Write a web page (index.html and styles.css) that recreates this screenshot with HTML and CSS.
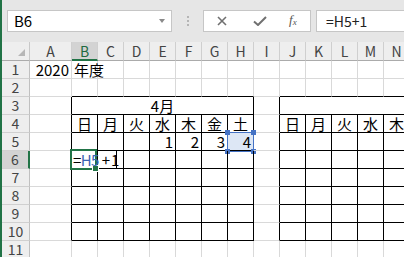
FILE: index.html
```
<!DOCTYPE html>
<html>
<head>
<title>Book1 - Excel</title>
<meta http-equiv="Content-Type" content="text/html; charset=UTF-8" />
<link rel="stylesheet" href="styles.css">
</head>
<body>
<div class="app">

<div class="bar">
  <div class="namebox"><span>B6</span><i class="arrow"></i></div>
  <div class="grip"><b></b><b></b><b></b></div>
  <div class="fxbox">
    <svg class="ic" width="10" height="10" viewBox="0 0 10 10"><path d="M1 1L9 9M9 1L1 9" stroke="#707070" stroke-width="1.6" fill="none"/></svg>
    <svg class="ic ok" width="14" height="10" viewBox="0 0 14 10"><path d="M1 5.5L5 9L13 1" stroke="#707070" stroke-width="2" fill="none"/></svg>
    <span class="fx">f<sub>x</sub></span>
  </div>
  <div class="formula">=H5+1</div>
</div>

<div class="sheet">
  <div class="corner"><i></i></div>
  <div class="ch">A</div><div class="ch on">B</div><div class="ch">C</div><div class="ch">D</div><div class="ch">E</div><div class="ch">F</div><div class="ch">G</div><div class="ch">H</div><div class="ch">I</div><div class="ch">J</div><div class="ch">K</div><div class="ch">L</div><div class="ch">M</div><div class="ch">N</div>

  <div class="rh">1</div>
  <div class="c num">2020</div><div class="c txt">年度</div><div class="c"></div><div class="c"></div><div class="c"></div><div class="c"></div><div class="c"></div><div class="c"></div><div class="c"></div><div class="c"></div><div class="c"></div><div class="c"></div><div class="c"></div><div class="c"></div>

  <div class="rh">2</div>
  <div class="c"></div><div class="c kb"></div><div class="c kb"></div><div class="c kb"></div><div class="c kb"></div><div class="c kb"></div><div class="c kb"></div><div class="c kb"></div><div class="c"></div><div class="c kb"></div><div class="c kb"></div><div class="c kb"></div><div class="c kb"></div><div class="c kb"></div>

  <div class="rh">3</div>
  <div class="c kr"></div><div class="c kr kb mid span7">4月</div><div class="c kr"></div><div class="c kb span5"></div>

  <div class="rh">4</div>
  <div class="c kr"></div><div class="c kr kb mid">日</div><div class="c kr kb mid">月</div><div class="c kr kb mid">火</div><div class="c kr kb mid">水</div><div class="c kr kb mid">木</div><div class="c kr kb mid">金</div><div class="c kr kb mid">土</div><div class="c kr"></div><div class="c kr kb mid">日</div><div class="c kr kb mid">月</div><div class="c kr kb mid">火</div><div class="c kr kb mid">水</div><div class="c kr kb mid">木</div>

  <div class="rh">5</div>
  <div class="c kr"></div><div class="c kr kb"></div><div class="c kr kb"></div><div class="c kr kb"></div><div class="c kr kb num">1</div><div class="c kr kb num">2</div><div class="c kr kb num">3</div><div class="c kr kb num ref">4<div class="refbox"><i class="h1"></i><i class="h2"></i><i class="h3"></i><i class="h4"></i></div></div><div class="c kr"></div><div class="c kr kb"></div><div class="c kr kb"></div><div class="c kr kb"></div><div class="c kr kb"></div><div class="c kr kb"></div>

  <div class="rh on">6</div>
  <div class="c kr"></div><div class="c kr kb edit"><div class="active"><i></i></div><span class="editor">=<span class="blue">H5</span><span class="rest">+1</span></span></div><div class="c kr kb"></div><div class="c kr kb"></div><div class="c kr kb"></div><div class="c kr kb"></div><div class="c kr kb"></div><div class="c kr kb"></div><div class="c kr"></div><div class="c kr kb"></div><div class="c kr kb"></div><div class="c kr kb"></div><div class="c kr kb"></div><div class="c kr kb"></div>

  <div class="rh">7</div>
  <div class="c kr"></div><div class="c kr kb"></div><div class="c kr kb"></div><div class="c kr kb"></div><div class="c kr kb"></div><div class="c kr kb"></div><div class="c kr kb"></div><div class="c kr kb"></div><div class="c kr"></div><div class="c kr kb"></div><div class="c kr kb"></div><div class="c kr kb"></div><div class="c kr kb"></div><div class="c kr kb"></div>

  <div class="rh">8</div>
  <div class="c kr"></div><div class="c kr kb"></div><div class="c kr kb"></div><div class="c kr kb"></div><div class="c kr kb"></div><div class="c kr kb"></div><div class="c kr kb"></div><div class="c kr kb"></div><div class="c kr"></div><div class="c kr kb"></div><div class="c kr kb"></div><div class="c kr kb"></div><div class="c kr kb"></div><div class="c kr kb"></div>

  <div class="rh">9</div>
  <div class="c kr"></div><div class="c kr kb"></div><div class="c kr kb"></div><div class="c kr kb"></div><div class="c kr kb"></div><div class="c kr kb"></div><div class="c kr kb"></div><div class="c kr kb"></div><div class="c kr"></div><div class="c kr kb"></div><div class="c kr kb"></div><div class="c kr kb"></div><div class="c kr kb"></div><div class="c kr kb"></div>

  <div class="rh">10</div>
  <div class="c kr"></div><div class="c kr kb"></div><div class="c kr kb"></div><div class="c kr kb"></div><div class="c kr kb"></div><div class="c kr kb"></div><div class="c kr kb"></div><div class="c kr kb"></div><div class="c kr"></div><div class="c kr kb"></div><div class="c kr kb"></div><div class="c kr kb"></div><div class="c kr kb"></div><div class="c kr kb"></div>

  <div class="rh">11</div>
  <div class="c"></div><div class="c"></div><div class="c"></div><div class="c"></div><div class="c"></div><div class="c"></div><div class="c"></div><div class="c"></div><div class="c"></div><div class="c"></div><div class="c"></div><div class="c"></div><div class="c"></div><div class="c"></div>
</div>

</div>
</body>
</html>
```

FILE: styles.css
```
body{margin:0;background:#fff;}
.app{
  border-left:2px solid #217346;
  height:257px;
  overflow:hidden;
  font-family:"Noto Sans CJK JP","Noto Sans",sans-serif;
  color:#000;
}

/* formula bar */
.bar{
  display:flex;
  align-items:flex-start;
  height:42px;
  padding-top:10px;
  box-sizing:border-box;
  background:#e6e6e6;
}
.namebox{
  position:relative;
  margin-left:5px;
  width:165px;
  height:22px;
  box-sizing:border-box;
  background:#fff;
  border:1px solid #c6c6c6;
  font-size:15px;
  line-height:20px;
  padding-left:6px;
}
.arrow{
  position:absolute;
  right:6px;
  top:8px;
  border-left:3px solid transparent;
  border-right:3px solid transparent;
  border-top:4px solid #8a8a8a;
}
.grip{
  display:flex;
  flex-direction:column;
  gap:2px;
  margin:6px 0 0 15px;
}
.grip b{width:2px;height:2px;background:#b5b5b5;}
.fxbox{
  display:flex;
  align-items:center;
  margin-left:14px;
  width:108px;
  height:22px;
  box-sizing:border-box;
  background:#fff;
  border:1px solid #c6c6c6;
  padding-left:13px;
}
.ic{display:block;}
.ok{margin-left:26px;}
.fx{
  margin-left:22px;
  font-family:"Liberation Serif",serif;
  font-style:italic;
  font-size:13px;
  color:#555;
  line-height:14px;
}
.fx sub{font-size:9px;vertical-align:-1px;}
.formula{
  flex:1;
  margin-left:5px;
  height:22px;
  box-sizing:border-box;
  background:#fff;
  border:1px solid #c6c6c6;
  border-right:none;
  font-size:14px;
  line-height:20px;
  padding-left:9px;
  color:#222;
}

/* grid */
.sheet{
  display:grid;
  grid-template-columns:28px 42px repeat(13,26px);
  grid-template-rows:19px repeat(11,18px);
  font-size:15px;
}
.sheet > div{box-sizing:border-box;}
.corner{
  position:relative;
  background:#eeeeee;
  border-right:1px solid #c8c8c8;
  border-bottom:1px solid #ababab;
}
.corner i{
  position:absolute;
  right:4px;
  bottom:4px;
  border-left:7px solid transparent;
  border-bottom:7px solid #b6b6b6;
}
.ch{
  background:#eeeeee;
  border-right:1px solid #cfcfcf;
  border-bottom:1px solid #ababab;
  text-align:center;
  color:#444;
  font-size:14px;
  line-height:18px;
}
.ch.on{
  background:#d3d3d3;
  border-bottom:2px solid #217346;
  color:#1e6b40;
}
.rh{
  background:#eeeeee;
  border-right:1px solid #c0c0c0;
  border-bottom:1px solid #d0d0d0;
  text-align:center;
  color:#444;
  font-size:14px;
  line-height:17px;
}
.rh.on{
  background:#d3d3d3;
  border-right:2px solid #217346;
}
.c{
  position:relative;
  border-right:1px solid #d9d9d9;
  border-bottom:1px solid #d9d9d9;
  line-height:17px;
  white-space:nowrap;
}
.kr{border-right-color:#000;}
.kb{border-bottom-color:#000;}
.num{text-align:right;padding-right:2px;}
.txt{padding-left:2px;overflow:visible;}
.mid{text-align:center;}
.span7{grid-column:span 7;}
.span5{grid-column:span 5;}

/* referenced cell H5 */
.ref{background:#dde7f5;}
.refbox{
  position:absolute;
  left:-1px;
  top:-1px;
  right:-1px;
  bottom:-2px;
  border:1px solid #4472c4;
}
.refbox i{
  position:absolute;
  width:5px;
  height:5px;
  background:#4472c4;
}
.refbox .h1{left:-3px;top:-3px;}
.refbox .h2{right:-3px;top:-3px;}
.refbox .h3{left:-3px;bottom:-3px;}
.refbox .h4{right:-3px;bottom:-3px;}

/* cell being edited */
.edit{z-index:2;}
.editor{
  position:absolute;
  left:0;
  top:0;
  width:45px;
  height:17px;
  box-sizing:border-box;
  padding-left:1px;
  letter-spacing:-0.6px;
  border-right:1px solid #000;
  z-index:3;
}
.blue{color:#3b64b4;}
.rest{margin-left:3px;letter-spacing:1px;}
.active{
  position:absolute;
  left:-2px;
  top:-2px;
  width:27px;
  height:21px;
  border:2px solid #217346;
  box-sizing:border-box;
  z-index:2;
}
.active i{
  position:absolute;
  right:-4px;
  bottom:-4px;
  width:5px;
  height:5px;
  background:#217346;
  border:1px solid #fff;
}
```
